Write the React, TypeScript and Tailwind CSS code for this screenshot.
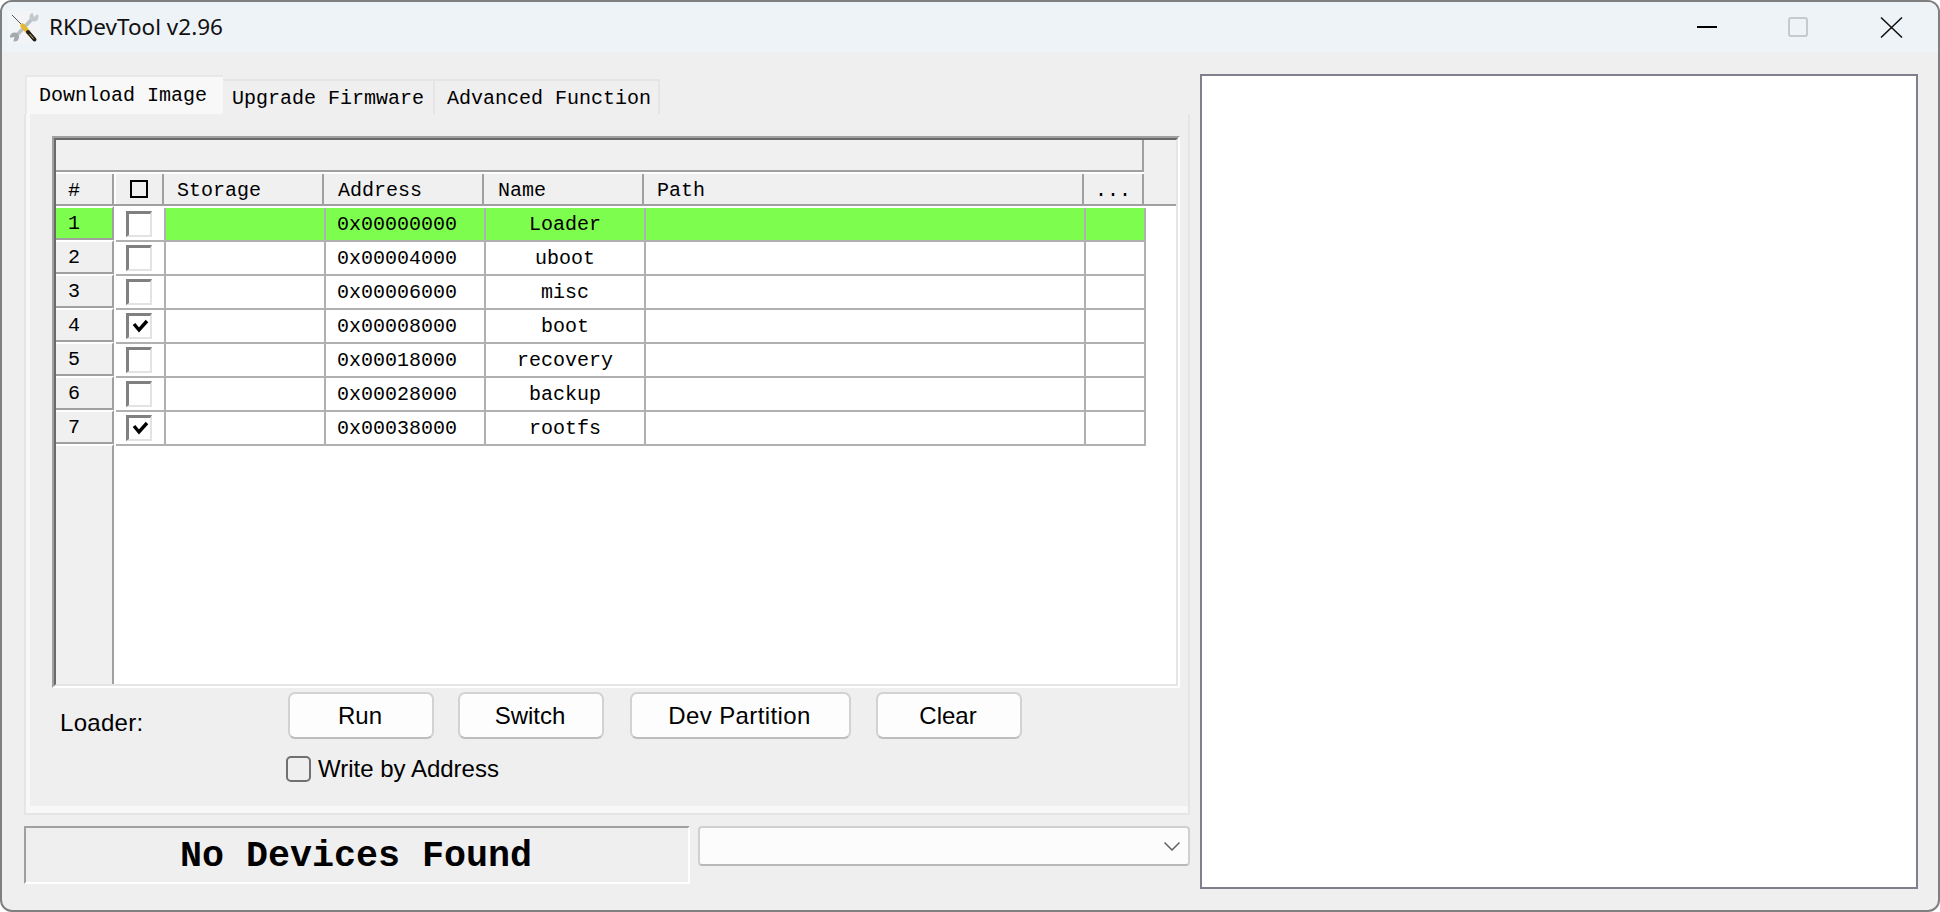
import React from 'react';

const rows = [
  { id: 1, checked: false, address: '0x00000000', name: 'Loader', active: true },
  { id: 2, checked: false, address: '0x00004000', name: 'uboot' },
  { id: 3, checked: false, address: '0x00006000', name: 'misc' },
  { id: 4, checked: true, address: '0x00008000', name: 'boot' },
  { id: 5, checked: false, address: '0x00018000', name: 'recovery' },
  { id: 6, checked: false, address: '0x00028000', name: 'backup' },
  { id: 7, checked: true, address: '0x00038000', name: 'rootfs' },
];

function AppIcon() {
  return (
    <svg width="32" height="32" viewBox="0 0 32 32" className="bg-[#f3f4f5]">
      {/* wrench */}
      <path d="M8 25 L25 7" stroke="#b9c0c4" strokeWidth="3.6" fill="none" />
      <circle cx="26" cy="6" r="4.6" fill="#c3c9cc" />
      <path d="M26 6 L32 1 L24 0 Z" fill="#f3f4f5" />
      <circle cx="6.5" cy="26" r="4.6" fill="#a3abaf" />
      <path d="M6.5 26 L0 27 L5 32 Z" fill="#f3f4f5" />
      {/* screwdriver */}
      <path d="M4 4 L15 15" stroke="#555" strokeWidth="1" fill="none" />
      <path d="M14.5 14.5 L20 21" stroke="#e6b82e" strokeWidth="4.4" strokeLinecap="round" fill="none" />
      <path d="M20 21 L26.5 28.5" stroke="#222" strokeWidth="4" strokeLinecap="round" fill="none" />
      <path d="M21.5 23 L25.5 27.5" stroke="#e6b82e" strokeWidth="1" fill="none" />
    </svg>
  );
}

function RowCheckbox({ checked }: { checked: boolean }) {
  return (
    <div className="w-[26px] h-[26px] bg-white border-t-[3px] border-l-[3px] border-r-2 border-b-2 border-t-[#808080] border-l-[#808080] border-r-[#e3e3e3] border-b-[#e3e3e3]">
      {checked && (
        <svg width="21" height="21" viewBox="0 0 21 21" className="block">
          <path d="M5 8 L10 14 L18 5" stroke="#000" strokeWidth="3.4" fill="none" />
        </svg>
      )}
    </div>
  );
}

function Button({ label, className }: { label: string; className: string }) {
  return (
    <button className={`h-[47px] pr-[2px] flex items-center justify-center rounded-[7px] border-2 border-[#d2d2d2] border-b-[#bdbdbd] bg-[#fdfdfd] text-black text-[24px] ${className}`}>
      {label}
    </button>
  );
}

function FileTable() {
  return (
    <div className="ml-[22px] w-[1128px] h-[552px] border-t-2 border-l-2 border-r-2 border-b-2 border-t-[#a0a0a0] border-l-[#a0a0a0] border-r-white border-b-white">
      <div className="h-full border-2 border-t-[#696969] border-l-[#696969] border-r-[#e5e5e5] border-b-[#e5e5e5] flex flex-col bg-white font-['Liberation_Mono',monospace] text-[20px] text-black">
        {/* header */}
        <div className="h-[66px] shrink-0 bg-[#f0f0f0] border-b-2 border-[#a0a0a0]">
          <div className="w-[1088px]">
            <div className="h-[32px] border-b-2 border-r-2 border-[#a0a0a0]" />
            <div className="h-[32px] border-t-2 border-white flex">
              <div className="w-[58px] pl-[12px] pt-[4px] border-r-2 border-[#a0a0a0] flex items-center">#</div>
              <div className="w-[2px] bg-white" />
              <div className="w-[48px] border-r-2 border-[#a0a0a0] flex items-center justify-center">
                <div className="w-[18px] h-[18px] border-2 border-black" />
              </div>
              <div className="w-[160px] pl-[13px] pt-[4px] border-r-2 border-[#a0a0a0] flex items-center">Storage</div>
              <div className="w-[160px] pl-[14px] pt-[4px] border-r-2 border-[#a0a0a0] flex items-center">Address</div>
              <div className="w-[160px] pl-[14px] pt-[4px] border-r-2 border-[#a0a0a0] flex items-center">Name</div>
              <div className="w-[440px] pl-[13px] pt-[4px] border-r-2 border-[#a0a0a0] flex items-center">Path</div>
              <div className="w-[60px] pl-[11px] pt-[4px] border-r-2 border-[#a0a0a0] flex items-center">...</div>
            </div>
          </div>
        </div>
        {/* body */}
        <div className="flex-1 flex min-h-0">
          <div className="w-[58px] flex flex-col">
            {rows.map((row) => (
              <div
                key={row.id}
                className={`h-[34px] pl-[12px] pt-[2px] flex items-center border-t-2 border-t-white border-b-2 border-b-[#a0a0a0] border-r-2 border-r-[#a0a0a0] ${row.active ? 'bg-[#7dfe4e]' : 'bg-[#f0f0f0]'}`}
              >
                {row.id}
              </div>
            ))}
            <div className="flex-1 bg-[#f0f0f0] border-t-2 border-t-white border-r-2 border-r-[#a0a0a0]" />
          </div>
          <div className="ml-[2px] mt-[2px] w-[1030px] flex flex-col">
            {rows.map((row) => (
              <div key={row.id} className="h-[34px] flex border-b-2 border-[#b0b0b0]">
                <div className="w-[50px] pl-[10px] border-r-2 border-[#b0b0b0] bg-white flex items-center">
                  <RowCheckbox checked={row.checked} />
                </div>
                <div className={`w-[160px] border-r-2 border-[#b0b0b0] ${row.active ? 'bg-[#7dfe4e]' : ''}`} />
                <div className={`w-[160px] pl-[11px] pt-[1px] border-r-2 border-[#b0b0b0] flex items-center ${row.active ? 'bg-[#7dfe4e]' : ''}`}>
                  {row.address}
                </div>
                <div className={`w-[160px] pt-[2px] border-r-2 border-[#b0b0b0] flex items-center justify-center ${row.active ? 'bg-[#7dfe4e]' : ''}`}>
                  {row.name}
                </div>
                <div className={`w-[440px] border-r-2 border-[#b0b0b0] ${row.active ? 'bg-[#7dfe4e]' : ''}`} />
                <div className={`w-[60px] border-r-2 border-[#b0b0b0] ${row.active ? 'bg-[#7dfe4e]' : ''}`} />
              </div>
            ))}
          </div>
        </div>
      </div>
    </div>
  );
}

export default function App() {
  return (
    <div className="w-[1940px] h-[912px] bg-white overflow-hidden">
      <div className="w-full h-full flex flex-col bg-[#efefef] border-2 border-[#7f7f7f] rounded-[12px] overflow-hidden font-['Liberation_Sans',Arial,sans-serif]">
        {/* title bar */}
        <div className="h-[50px] shrink-0 bg-[#eef3f8] flex items-center pl-[6px]">
          <AppIcon />
          <span className="ml-[9px] text-[22.5px] text-[#111] font-['Noto_Sans',sans-serif]">RKDevTool v2.96</span>
          <div className="ml-auto flex items-center mr-[35px]">
            <div className="w-[20px] h-[2px] bg-black" />
            <div className="ml-[71px] w-[20px] h-[20px] rounded-[3px] border-2 border-[#c6cacd]" />
            <svg width="23" height="21" viewBox="0 0 23 21" className="ml-[72px]">
              <path d="M1 0.5 L22 20.5 M22 0.5 L1 20.5" stroke="#111" strokeWidth="1.5" fill="none" />
            </svg>
          </div>
        </div>

        <div className="flex-1 flex pl-[22px] min-h-0">
          {/* left column */}
          <div className="w-[1166px] shrink-0 mt-[23px]">
            <div className="h-[39px] flex items-end pl-[1px] font-['Liberation_Mono',monospace] text-[20px] text-black">
              <div className="w-[198px] h-[39px] pl-[12px] flex items-center bg-[#f8f8f8] border-t-2 border-l-2 border-[#e8e8e8]">Download Image</div>
              <div className="w-[212px] h-[35px] pl-[9px] pt-[2px] flex items-center bg-[#efefef] border-t-2 border-r-2 border-[#e5e5e5]">Upgrade Firmware</div>
              <div className="w-[225px] h-[35px] pl-[12px] pt-[2px] flex items-center bg-[#efefef] border-t-2 border-r-2 border-[#e5e5e5]">Advanced Function</div>
            </div>
            <div className="h-[701px] border-l-2 border-r-2 border-b-2 border-[#e5e5e5]">
              <div className="h-full pt-[22px] border-l-4 border-b-[7px] border-[#f8f8f8] bg-[#efefef]">
                <FileTable />
                <div className="mt-[4px] flex">
                  <span className="ml-[30px] w-[228px] mt-[17px] text-[24px] leading-[27px] tracking-[0.3px] text-black">Loader:</span>
                  <Button label="Run" className="w-[146px]" />
                  <Button label="Switch" className="w-[146px] ml-[24px]" />
                  <Button label="Dev Partition" className="w-[221px] ml-[26px] tracking-[0.4px]" />
                  <Button label="Clear" className="w-[146px] ml-[25px]" />
                </div>
                <div className="mt-[17px] ml-[256px] flex items-center">
                  <div className="w-[25px] h-[26px] rounded-[5px] border-2 border-[#707070]" />
                  <span className="ml-[7px] text-[24px] leading-[26px] text-black">Write by Address</span>
                </div>
              </div>
            </div>
            <div className="mt-[11px] flex items-start">
              <div className="w-[666px] h-[58px] pt-[2px] pr-[2px] flex items-center justify-center border-2 border-t-[#a0a0a0] border-l-[#a0a0a0] border-r-white border-b-white font-['Liberation_Mono',monospace] font-bold text-[36.67px] text-black">
                No Devices Found
              </div>
              <div className="ml-[8px] w-[492px] h-[40px] flex items-center justify-end pr-[8px] rounded-[4px] bg-[#fcfcfc] border-2 border-[#d0d0d0] border-b-[#b9b9b9]">
                <svg width="16" height="9" viewBox="0 0 16 9">
                  <path d="M0.5 0.5 L8 8 L15.5 0.5" stroke="#606060" strokeWidth="1.5" fill="none" />
                </svg>
              </div>
            </div>
          </div>
          {/* right panel */}
          <div className="ml-[10px] mt-[22px] w-[718px] h-[815px] shrink-0 bg-white border-2 border-[#7f808c]" />
        </div>
      </div>
    </div>
  );
}
